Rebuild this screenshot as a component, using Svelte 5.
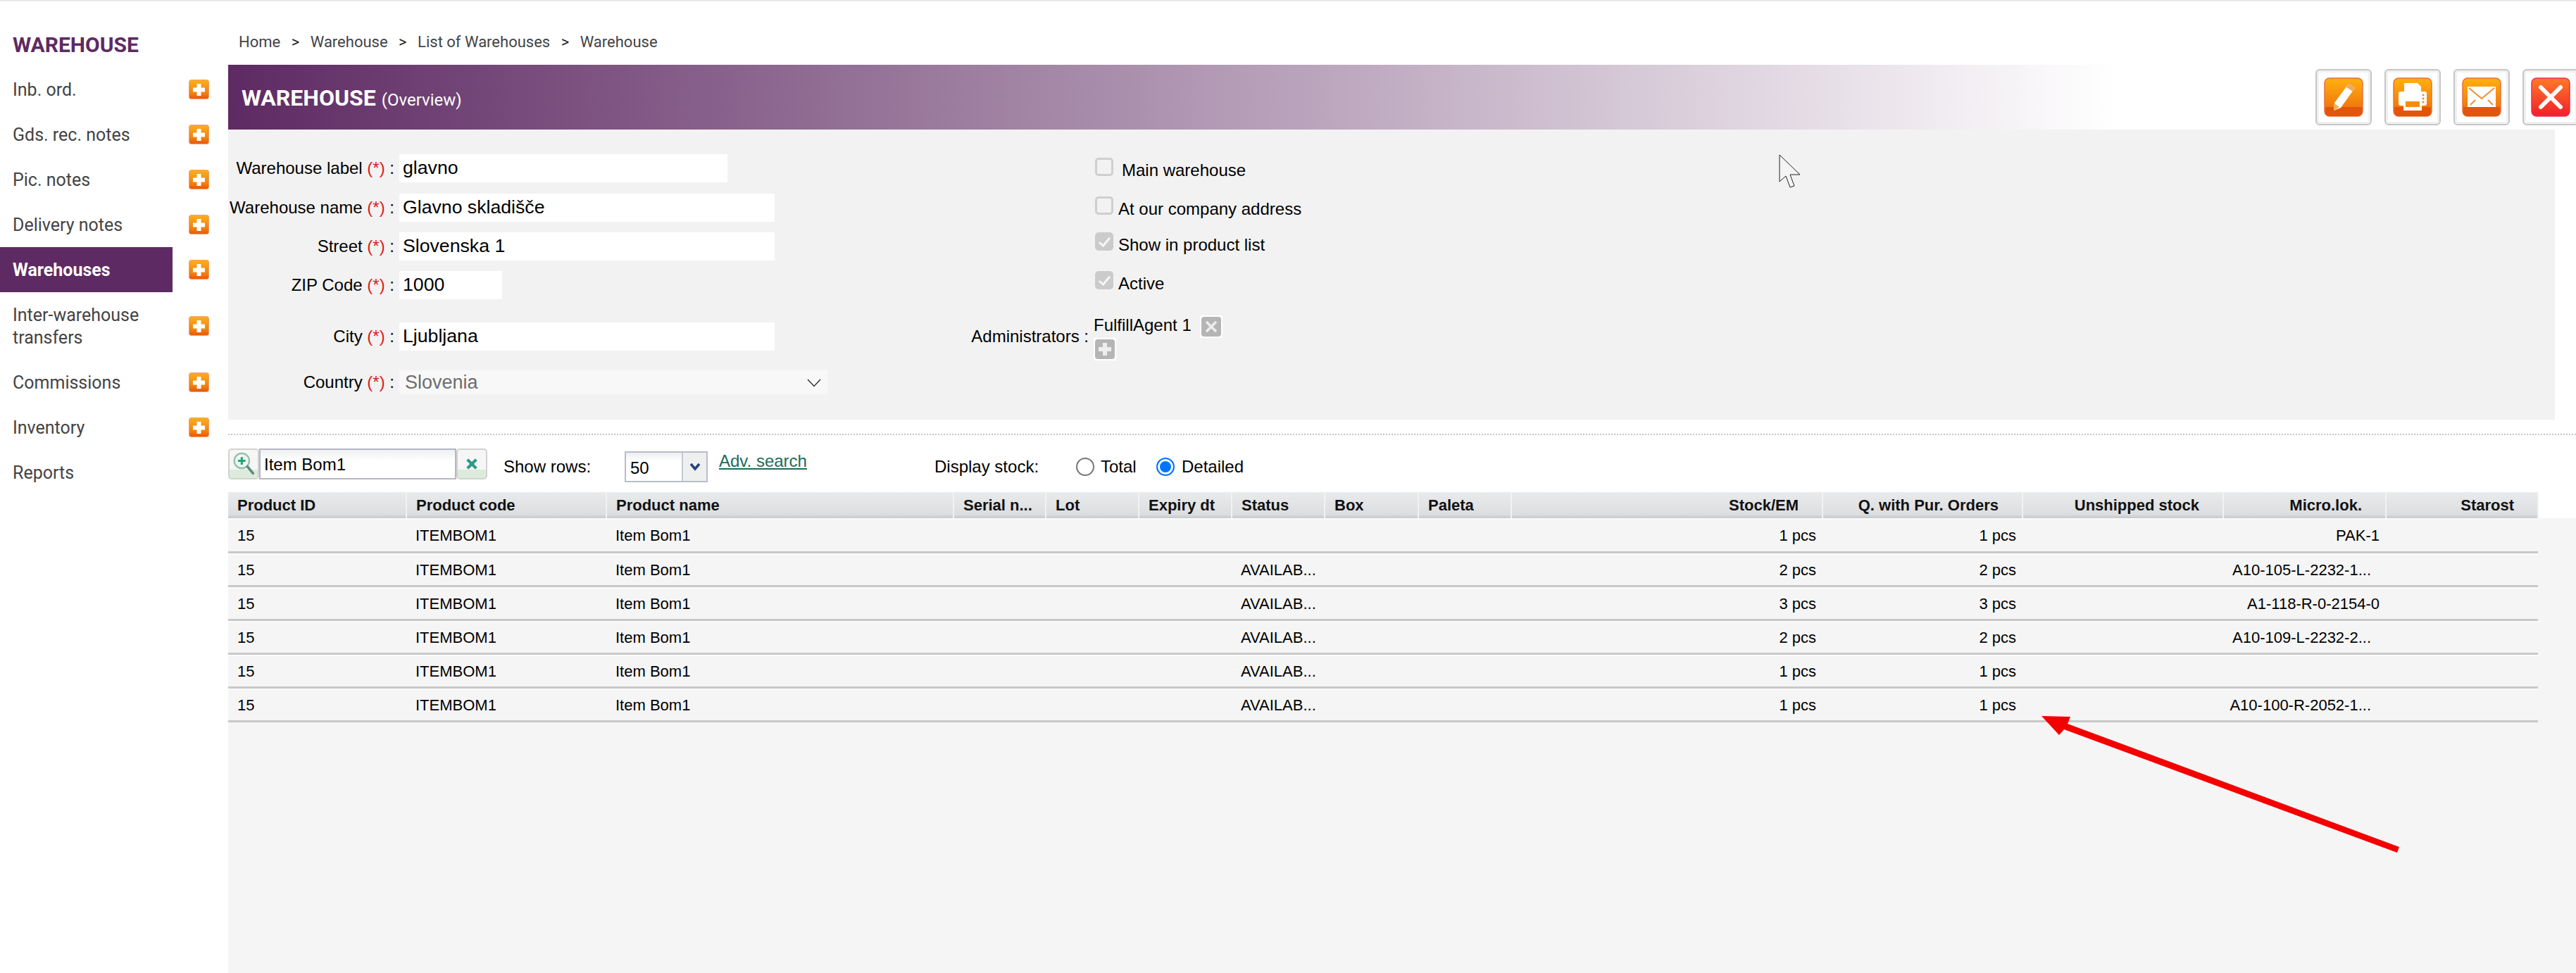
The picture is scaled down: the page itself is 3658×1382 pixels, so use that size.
<script>
  const nav = [
    { label: 'Inb. ord.' },
    { label: 'Gds. rec. notes' },
    { label: 'Pic. notes' },
    { label: 'Delivery notes' },
    { label: 'Warehouses', active: true },
    { label: 'Inter-warehouse transfers', tall: true },
    { label: 'Commissions' },
    { label: 'Inventory' },
    { label: 'Reports', noAdd: true }
  ];

  const fields = [
    { label: 'Warehouse label', value: 'glavno', cls: 'w-label' },
    { label: 'Warehouse name', value: 'Glavno skladišče', cls: 'w-wide' },
    { label: 'Street', value: 'Slovenska 1', cls: 'w-wide' },
    { label: 'ZIP Code', value: '1000', cls: 'w-zip' },
    { label: 'City', value: 'Ljubljana', cls: 'w-wide' }
  ];

  const checks = [
    { label: 'Main warehouse', checked: false, cls: 'c1' },
    { label: 'At our company address', checked: false, cls: 'c2' },
    { label: 'Show in product list', checked: true, cls: 'c3' },
    { label: 'Active', checked: true, cls: 'c4' }
  ];

  const cols = [
    { name: 'Product ID', w: 253 },
    { name: 'Product code', w: 284 },
    { name: 'Product name', w: 493 },
    { name: 'Serial n...', w: 131 },
    { name: 'Lot', w: 132 },
    { name: 'Expiry dt', w: 132 },
    { name: 'Status', w: 132 },
    { name: 'Box', w: 133 },
    { name: 'Paleta', w: 132 },
    { name: 'Stock/EM', w: 442, right: true },
    { name: 'Q. with Pur. Orders', w: 284, right: true },
    { name: 'Unshipped stock', w: 285, right: true },
    { name: 'Micro.lok.', w: 231, right: true },
    { name: 'Starost', w: 216, right: true }
  ];

  const rows = [
    { status: '', qty: 1, micro: 'PAK-1' },
    { status: 'AVAILAB...', qty: 2, micro: 'A10-105-L-2232-1...', cut: true },
    { status: 'AVAILAB...', qty: 3, micro: 'A1-118-R-0-2154-0' },
    { status: 'AVAILAB...', qty: 2, micro: 'A10-109-L-2232-2...', cut: true },
    { status: 'AVAILAB...', qty: 1, micro: '' },
    { status: 'AVAILAB...', qty: 1, micro: 'A10-100-R-2052-1...', cut: true }
  ];
</script>

{#snippet addIcon()}
  <svg class="add" viewBox="0 0 29 28" aria-hidden="true">
    <defs>
      <linearGradient id="addFill" x1="0" y1="0" x2="0" y2="1">
        <stop offset="0" stop-color="#fbb01c" />
        <stop offset="0.7" stop-color="#f2800f" />
        <stop offset="1" stop-color="#e6560d" />
      </linearGradient>
    </defs>
    <rect x="0.5" y="0.5" width="28" height="27" rx="3" fill="url(#addFill)" stroke="#f0a070" />
    <path d="M11.5 6h6v5.5H23v6h-5.500V23h-6v-5.500H6v-6h5.500z" fill="#fff" />
  </svg>
{/snippet}

{#snippet tile(red)}
  <rect x="1" y="1" width="54" height="54" rx="7" fill={red ? 'url(#tileRed)' : 'url(#tileOrange)'} stroke={red ? '#ee2a5a' : '#e8703c'} stroke-width="1.500" />
  {#if !red}
    <path d="M2 42h52v7a6 6 0 0 1-6 6H8a6 6 0 0 1-6-6z" fill="#e2550a" />
  {/if}
{/snippet}

<div class="page">
  <svg class="defs" width="0" height="0" aria-hidden="true">
    <defs>
      <linearGradient id="tileOrange" x1="0" y1="0" x2="0" y2="1">
        <stop offset="0" stop-color="#ffb110" />
        <stop offset="0.75" stop-color="#f2790c" />
        <stop offset="1" stop-color="#e2550a" />
      </linearGradient>
      <linearGradient id="tileRed" x1="0" y1="0" x2="0" y2="1">
        <stop offset="0" stop-color="#ff7a28" />
        <stop offset="1" stop-color="#f01f2a" />
      </linearGradient>
    </defs>
  </svg>

  <aside class="side">
    <h2 class="side-title">WAREHOUSE</h2>
    <ul class="nav">
      {#each nav as item}
        <li class="nav-row" class:tall={item.tall}>
          <span class="nav-label" class:active={item.active}>{item.label}</span>
          {#if !item.noAdd}
            {@render addIcon()}
          {/if}
        </li>
      {/each}
    </ul>
  </aside>

  <main class="main">
    <nav class="crumbs">
      <span>Home</span><i>&gt;</i><span>Warehouse</span><i>&gt;</i><span>List of Warehouses</span><i>&gt;</i><span>Warehouse</span>
    </nav>

    <header class="head">
      <h1 class="head-title">WAREHOUSE <small>(Overview)</small></h1>
      <div class="head-btns">
        <button class="tool" aria-label="Edit">
          <svg viewBox="0 0 56 56">
            {@render tile(false)}
            <path d="M35 9l9 6-20 28-10 4 1-11z" fill="#fff" />
            <path d="M35 9l9 6-3 5-9-6z" fill="#f5a860" />
            <path d="M15 37l7 5-8 5z" fill="#f8b040" />
          </svg>
        </button>
        <button class="tool" aria-label="Print">
          <svg viewBox="0 0 56 56">
            {@render tile(false)}
            <path d="M16 8h19l5 5v8H16z" fill="#fff" />
            <rect x="8" y="20" width="40" height="20" rx="3" fill="#fff" />
            <rect x="15" y="32" width="26" height="15" fill="#fff" />
            <rect x="18" y="34" width="20" height="8" fill="#f58c10" />
            <circle cx="43" cy="25" r="1.500" fill="#e8873a" />
            <circle cx="43" cy="30" r="1.500" fill="#e8873a" />
            <circle cx="43" cy="35" r="1.500" fill="#e8873a" />
          </svg>
        </button>
        <button class="tool" aria-label="Mail">
          <svg viewBox="0 0 56 56">
            {@render tile(false)}
            <rect x="8" y="13" width="40" height="29" fill="#fff" />
            <path d="M10 15l18 15 18-15M12 39l7-7M44 39l-7-7" fill="none" stroke="#f08c28" stroke-width="1.800" />
          </svg>
        </button>
        <button class="tool" aria-label="Close">
          <svg viewBox="0 0 56 56">
            {@render tile(true)}
            <path d="M14 14l28 28M42 14L14 42" stroke="#fff" stroke-width="6" stroke-linecap="round" />
          </svg>
        </button>
      </div>
    </header>

    <form class="panel">
      <div class="fields">
        {#each fields as f}
          <div class="lbl">{f.label} <em>(*)</em> :</div>
          <input class="inp {f.cls}" value={f.value} />
        {/each}
        <div class="lbl country">Country <em>(*)</em> :</div>
        <div class="sel-wrap">
          <select class="sel" disabled><option>Slovenia</option></select>
          <svg class="chev" viewBox="0 0 20 12" aria-hidden="true"><path d="M1 1l9 9.500L19 1" fill="none" stroke="#333" stroke-width="1.500" /></svg>
        </div>
      </div>

      <div class="extras">
        {#each checks as c}
          <label class="check {c.cls}">
            <input type="checkbox" checked={c.checked} disabled />
            <span>{c.label}</span>
          </label>
        {/each}
        <div class="admins">
          <span class="admins-lbl">Administrators :</span>
          <div class="admins-val">
            <div class="agent">
              <span>FulfillAgent 1</span>
              <svg class="grey-btn" viewBox="0 0 32 32" aria-hidden="true">
                <rect width="32" height="32" fill="#fff" />
                <rect x="2" y="2" width="28" height="28" rx="4" fill="#b5b5b5" />
                <path d="M9 9l14 14M23 9L9 23" stroke="#eee" stroke-width="3.500" />
              </svg>
            </div>
            <svg class="grey-btn" viewBox="0 0 32 32" aria-hidden="true">
              <rect width="32" height="32" fill="#fff" />
              <rect x="2" y="2" width="28" height="28" rx="4" fill="#b5b5b5" />
              <path d="M13 7h6v6h6v6h-6v6h-6v-6H7v-6h6z" fill="#eee" />
            </svg>
          </div>
        </div>
      </div>

      <svg class="cursor" viewBox="0 0 32 48" aria-hidden="true">
        <path d="M1 1v38l9-8 6 16 6-2-6-16h14z" fill="#f4f4f4" stroke="#222" stroke-width="1" />
      </svg>
    </form>

    <div class="dots"></div>

    <div class="toolbar">
      <div class="search">
        <span class="s-btn">
          <svg viewBox="0 0 36 40" aria-hidden="true">
            <circle cx="15" cy="15" r="12" fill="#eef7f2" stroke="#8fbfa8" stroke-width="2.500" />
            <path d="M15 9v12M9 15h12" stroke="#1fa873" stroke-width="3.500" />
            <path d="M24 24l9 11" stroke="#5f8a78" stroke-width="4" stroke-linecap="round" />
          </svg>
        </span>
        <input class="s-input" value="Item Bom1" />
        <span class="s-btn">
          <svg class="s-x" viewBox="0 0 20 20" aria-hidden="true"><path d="M3 3l14 14M17 3L3 17" stroke="#2e9a88" stroke-width="4.500" /></svg>
        </span>
      </div>

      <span class="show-lbl">Show rows:</span>
      <div class="rows-sel">
        <span class="rows-val">50</span>
        <span class="rows-arrow">
          <svg viewBox="0 0 16 12" aria-hidden="true"><path d="M2 2l6 7 6-7" fill="none" stroke="#24417f" stroke-width="3.500" /></svg>
        </span>
      </div>
      <a class="adv" href="#adv">Adv. search</a>

      <span class="stock-lbl">Display stock:</span>
      <label class="radio r1"><input type="radio" name="stock" /><span>Total</span></label>
      <label class="radio r2"><input type="radio" name="stock" checked /><span>Detailed</span></label>
    </div>

    <div class="list">
      <table class="grid">
        <colgroup>
          {#each cols as c}<col style="width:{c.w}px" />{/each}
        </colgroup>
        <thead>
          <tr>
            {#each cols as c}
              <th class:right={c.right}>{c.name}</th>
            {/each}
          </tr>
        </thead>
        <tbody>
          {#each rows as r}
            <tr>
              <td>15</td>
              <td>ITEMBOM1</td>
              <td>Item Bom1</td>
              <td></td>
              <td></td>
              <td></td>
              <td>{r.status}</td>
              <td></td>
              <td></td>
              <td class="num">{r.qty} pcs</td>
              <td class="num">{r.qty} pcs</td>
              <td></td>
              <td class="num" class:cut={r.cut}>{r.micro}</td>
              <td></td>
            </tr>
          {/each}
        </tbody>
      </table>
    </div>

    <svg class="arrow" viewBox="0 0 520 200" aria-hidden="true">
      <path d="M1 1l41 1-4 10 471 175-3 8L33 20l-7 8z" fill="#f40000" />
    </svg>
  </main>
</div>

<style>
  :global(body) {
    margin: 0;
    background: #fff;
  }

  .page {
    display: flex;
    height: 100vh;
    overflow: hidden;
    box-shadow: inset 0 2px 2px -1px #d4d4d4;
    font-family: "Liberation Sans", Arial, sans-serif;
    color: #000;
  }

  .defs {
    position: absolute;
  }

  /* sidebar */
  .side {
    flex: 0 0 324px;
    font-family: Roboto, sans-serif;
  }

  .side-title {
    margin: 0;
    padding: 50px 0 0 18px;
    height: 45px;
    font-size: 30px;
    line-height: 28px;
    font-weight: 700;
    color: #5e2a63;
  }

  .nav {
    list-style: none;
    margin: 0;
    padding: 0;
  }

  .nav-row {
    display: flex;
    align-items: center;
    width: 297px;
    height: 64px;
    justify-content: space-between;
  }

  .nav-row.tall {
    height: 96px;
  }

  .nav-label {
    box-sizing: border-box;
    width: 245px;
    height: 100%;
    display: flex;
    align-items: center;
    padding: 2px 0 0 18px;
    font-size: 25px;
    line-height: 32px;
    color: #444;
  }

  .nav-label.active {
    background: #5e2a63;
    color: #fff;
    font-weight: 700;
  }

  .add {
    width: 29px;
    height: 28px;
    flex: none;
  }

  /* main column */
  .main {
    position: relative;
    flex: 1;
    min-width: 0;
    display: flex;
    flex-direction: column;
  }

  .crumbs {
    height: 92px;
    box-sizing: border-box;
    padding: 46px 0 0 15px;
    display: flex;
    gap: 15.500px;
    font-family: Roboto, sans-serif;
    font-size: 22px;
    line-height: 28px;
    color: #444;
  }

  .crumbs i {
    font-style: normal;
    color: #222;
  }

  .head {
    flex: none;
    height: 92px;
    display: flex;
    align-items: center;
    justify-content: space-between;
    background: linear-gradient(90deg, #5e2a63 0, rgba(94, 42, 99, 0) 2680px);
  }

  .head-title {
    margin: 0;
    padding: 1px 0 0 19px;
    font-family: Roboto, sans-serif;
    font-size: 32px;
    font-weight: 700;
    color: #fff;
  }

  .head-title small {
    font-size: 24px;
    font-weight: 400;
  }

  .head-btns {
    display: flex;
    gap: 18px;
    margin-right: -4px;
  }

  .tool {
    box-sizing: border-box;
    width: 80px;
    height: 80px;
    padding: 0;
    display: flex;
    align-items: center;
    justify-content: center;
    background: #fff;
    border: 2px solid #c6c6c6;
    border-radius: 6px;
    box-shadow: inset 0 0 0 3px #f0f0f0;
  }

  .tool svg {
    width: 56px;
    height: 56px;
  }

  /* form panel */
  .panel {
    position: relative;
    flex: none;
    height: 412px;
    box-sizing: border-box;
    width: 3304px;
    padding-top: 35px;
    display: flex;
    background: #f2f2f2;
  }

  .fields {
    flex: 0 0 1000px;
    display: grid;
    grid-template-columns: 243px 1fr;
    grid-template-rows: 56px 55px 55px 73px 68px 34px;
    align-items: start;
    justify-items: start;
    align-content: start;
  }

  .lbl {
    justify-self: end;
    padding-right: 7px;
    font-size: 24px;
    line-height: 40px;
    white-space: nowrap;
  }

  .lbl.country {
    line-height: 34px;
  }

  .lbl em {
    font-style: normal;
    color: #d81e1e;
  }

  .inp {
    box-sizing: border-box;
    height: 40px;
    border: 0;
    padding: 0 5px 2px;
    background: #fff;
    font-family: "Liberation Sans", Arial, sans-serif;
    font-size: 26.670px;
    color: #000;
  }

  .w-label { width: 466px; }
  .w-wide { width: 533px; }
  .w-zip { width: 146px; }

  .sel-wrap {
    position: relative;
    width: 608px;
  }

  .sel {
    display: block;
    width: 100%;
    height: 34px;
    box-sizing: border-box;
    border: 0;
    padding: 0 0 0 8px;
    appearance: none;
    opacity: 1;
    background: #f8f8f8;
    font-family: "Liberation Sans", Arial, sans-serif;
    font-size: 27px;
    color: #6d6d6d;
  }

  .chev {
    position: absolute;
    right: 9px;
    top: 12px;
    width: 20px;
    height: 12px;
  }

  .extras {
    display: grid;
    grid-template-columns: 231px auto;
    grid-auto-rows: min-content;
    align-content: start;
    justify-items: start;
    padding-top: 5px;
  }

  .check {
    grid-column: 2;
    display: flex;
    align-items: flex-start;
    height: 26px;
    font-size: 24px;
  }

  .check input {
    appearance: none;
    box-sizing: border-box;
    position: relative;
    width: 26px;
    height: 26px;
    margin: 0 7px 0 0;
    border: 3px solid #cfcfcf;
    border-radius: 5px;
    background: #f2f2f2;
  }

  .check input:checked {
    background: #cbcbcb;
    border-color: #cbcbcb;
  }

  .check input:checked::after {
    content: "";
    position: absolute;
    left: 6px;
    top: 1px;
    width: 6px;
    height: 13px;
    border: solid #f6f6f6;
    border-width: 0 3px 3px 0;
    transform: rotate(40deg);
  }

  .check span {
    margin-top: 4px;
    line-height: 28px;
  }

  .c1 span { margin-left: 5px; }
  .c2 { margin-top: 29px; }
  .c3 { margin-top: 25px; }
  .c4 { margin-top: 29px; }

  .admins {
    grid-column: 1 / 3;
    display: grid;
    grid-template-columns: 231px auto;
    margin-top: 37px;
    margin-left: -2px;
    align-items: center;
    font-size: 24px;
  }

  .admins-lbl {
    justify-self: end;
    padding: 0 7px 4px 0;
  }

  .admins-val {
    display: flex;
    flex-direction: column;
    align-items: flex-start;
  }

  .agent {
    display: flex;
    align-items: center;
    gap: 12px;
  }

  .agent span {
    margin-top: -4px;
  }

  .grey-btn {
    width: 32px;
    height: 32px;
    display: block;
  }

  .cursor {
    position: absolute;
    left: 2202px;
    top: 35px;
    width: 32px;
    height: 48px;
  }

  .dots {
    flex: none;
    margin-top: 20px;
    height: 2px;
    background: repeating-linear-gradient(90deg, #c4c4c4 0 2px, #fff 2px 4px);
  }

  /* toolbar */
  .toolbar {
    flex: none;
    height: 81px;
    display: flex;
    align-items: flex-start;
    box-sizing: border-box;
    padding-top: 19px;
    font-size: 24px;
  }

  .search {
    display: flex;
    height: 44px;
  }

  .s-btn {
    box-sizing: border-box;
    width: 44px;
    height: 44px;
    display: flex;
    align-items: center;
    justify-content: center;
    border: 2px solid #d2d2d2;
    border-radius: 5px;
    background: linear-gradient(#f6f6f6 70%, #dcebdc 70%);
  }

  .s-btn svg {
    width: 32px;
    height: 36px;
  }

  .s-btn .s-x {
    width: 18px;
    height: 18px;
  }

  .s-input {
    box-sizing: border-box;
    width: 280px;
    height: 44px;
    border: 2px solid #b4b6c4;
    padding: 2px 6px 0 5px;
    background: linear-gradient(#eef0f1, #fff 40%);
    font-family: "Liberation Sans", Arial, sans-serif;
    font-size: 24px;
    color: #000;
  }

  .show-lbl {
    margin: 12px 0 0 23px;
    width: 172px;
    line-height: 28px;
  }

  .rows-sel {
    display: flex;
    box-sizing: border-box;
    width: 118px;
    height: 44px;
    margin-top: 4px;
    border: 2px solid #b9bcc8;
    background: linear-gradient(#eceef0, #fff 30%);
  }

  .rows-val {
    flex: 1;
    padding: 8px 0 0 6px;
    font-size: 24px;
    line-height: 28px;
  }

  .rows-arrow {
    flex: 0 0 33px;
    display: flex;
    align-items: center;
    justify-content: center;
    border-left: 2px solid #c6c8d2;
    background: #eef0f0;
  }

  .rows-arrow svg {
    width: 16px;
    height: 12px;
  }

  .adv {
    margin: 5px 0 0 16px;
    width: 306px;
    font-size: 24px;
    line-height: 26px;
    color: #1c6b58;
  }

  .stock-lbl {
    margin-top: 12px;
    width: 201px;
    line-height: 28px;
  }

  .radio {
    display: flex;
    align-items: center;
    margin-top: 13px;
    height: 26px;
  }

  .radio input {
    appearance: none;
    box-sizing: border-box;
    width: 26px;
    height: 26px;
    margin: 0 9px 0 0;
    border: 2.500px solid #767676;
    border-radius: 50%;
    background: #fff;
  }

  .radio input:checked {
    border-color: #0075ff;
    background: #0075ff;
    box-shadow: inset 0 0 0 3px #fff;
  }

  .r1 { width: 114px; }
  .r2 input { margin-right: 10px; }

  /* table */
  .list {
    flex: 1;
    background: linear-gradient(#fff 37px, #f5f5f5 37px);
  }

  .grid {
    table-layout: fixed;
    width: 3280px;
    border-collapse: collapse;
    font-size: 22px;
  }

  .grid th {
    box-sizing: border-box;
    height: 37px;
    padding: 1px 0 0 13px;
    text-align: left;
    font-weight: 700;
    white-space: nowrap;
    overflow: hidden;
    color: #111;
    background: linear-gradient(#e9eaeb, #dcdee0 85%, #c6c8ca);
    border-right: 2px solid #f2f2f2;
  }

  .grid th.right {
    padding: 1px 33px 0 0;
    text-align: right;
  }

  .grid td {
    box-sizing: border-box;
    height: 48px;
    padding: 3px 0 0 13px;
    white-space: nowrap;
    overflow: hidden;
    background: #f5f5f5;
    border-bottom: 3px solid #c8c8c8;
    box-shadow: inset 0 2px 0 #fbfbfb;
  }

  .grid td.num {
    padding: 3px 9px 0 0;
    text-align: right;
  }

  .grid td.cut {
    padding-right: 21px;
  }

  /* annotation drawn over the list */
  .arrow {
    position: absolute;
    left: 2574px;
    top: 1016px;
    width: 520px;
    height: 200px;
  }
</style>
